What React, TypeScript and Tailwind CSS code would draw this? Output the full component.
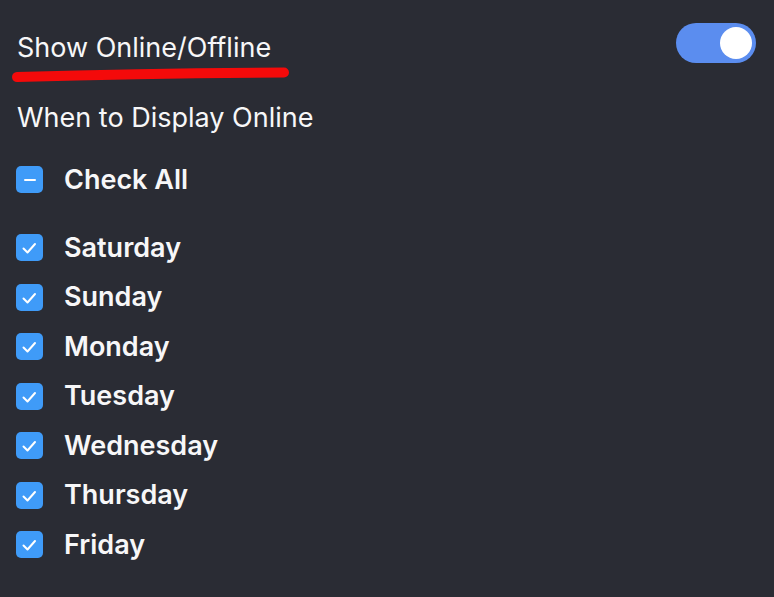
const days = ['Saturday', 'Sunday', 'Monday', 'Tuesday', 'Wednesday', 'Thursday', 'Friday'];

function Box({ mixed }: { mixed?: boolean }) {
  return (
    <div className="w-[27px] h-[27px] rounded-[5px] bg-[#3f9bf8] flex items-center justify-center shrink-0">
      {mixed ? (
        <div className="w-[12px] h-[2.5px] bg-white rounded-sm" />
      ) : (
        <svg width="27" height="27" viewBox="0 0 27 27" fill="none">
          <path d="M7.5 14.5 L11.5 18.5 L19 10" stroke="white" strokeWidth="2" strokeLinecap="round" strokeLinejoin="round" />
        </svg>
      )}
    </div>
  );
}

export default function App() {
  return (
    <div
      className="w-[774px] h-[597px] bg-[#2a2c34] text-[#f7f7f8] overflow-hidden pl-4 pr-[18px] pt-[23px]"
      style={{ fontFamily: 'Inter, "Noto Sans", sans-serif' }}
    >
      {/* Header */}
      <div className="flex items-start justify-between">
        <div className="flex flex-col">
          <div className="mt-[10px] text-[27px] leading-[30px] pl-[1px]">Show Online/Offline</div>
          <svg className="-ml-[4px] mt-[4px]" width="280" height="16" viewBox="0 0 280 16">
            <path d="M5 10 Q140 6 272 5.5" stroke="#f40a0a" strokeWidth="10" strokeLinecap="round" fill="none" />
          </svg>
        </div>
        <div className="w-[80px] h-[40px] rounded-full bg-[#5b8def] flex items-center justify-end pr-[4px]">
          <div className="w-[32px] h-[32px] rounded-full bg-white" />
        </div>
      </div>

      <div className="mt-[20px] text-[27px] leading-[30px] pl-[1px]">When to Display Online</div>

      {/* Check all */}
      <div className="mt-[22px] h-[49.5px] flex items-center gap-[21px]">
        <Box mixed />
        <span className="text-[27px] font-semibold">Check All</span>
      </div>

      <div className="mt-[18.5px] flex flex-col">
        {days.map((d) => (
          <div key={d} className="h-[49.5px] flex items-center gap-[21px]">
            <Box />
            <span className="text-[27px] font-semibold">{d}</span>
          </div>
        ))}
      </div>
    </div>
  );
}
